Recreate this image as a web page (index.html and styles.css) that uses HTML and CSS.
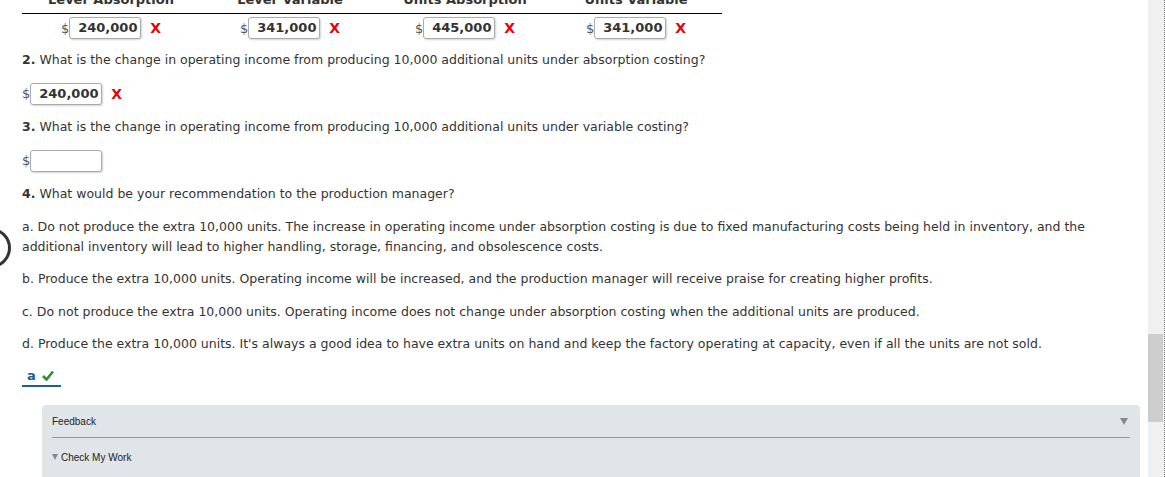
FILE: index.html
```html
<!DOCTYPE html>
<html>
<head>
<meta charset="utf-8">
<link rel="stylesheet" href="styles.css">
</head>
<body>
<div class="page">
  <div class="main">
    <div class="radio-edge"></div>
    <div class="content">
      <div class="grid">
        <div class="th">Lever Absorption</div>
        <div class="th">Lever Variable</div>
        <div class="th">Units Absorption</div>
        <div class="th">Units Variable</div>
        <div class="td"><span class="dollar">$</span><span class="field">240,000</span><span class="wrong">X</span></div>
        <div class="td"><span class="dollar">$</span><span class="field">341,000</span><span class="wrong">X</span></div>
        <div class="td"><span class="dollar">$</span><span class="field">445,000</span><span class="wrong">X</span></div>
        <div class="td"><span class="dollar">$</span><span class="field">341,000</span><span class="wrong">X</span></div>
      </div>
      <div class="stack">
        <p class="q"><b>2.</b> What is the change in operating income from producing 10,000 additional units under absorption costing?</p>
        <div class="answer"><span class="dollar">$</span><span class="field">240,000</span><span class="wrong">X</span></div>
        <p class="q"><b>3.</b> What is the change in operating income from producing 10,000 additional units under variable costing?</p>
        <div class="answer"><span class="dollar">$</span><span class="field empty"></span></div>
        <p class="q"><b>4.</b> What would be your recommendation to the production manager?</p>
        <p class="q">a. Do not produce the extra 10,000 units. The increase in operating income under absorption costing is due to fixed manufacturing costs being held in inventory, and the additional inventory will lead to higher handling, storage, financing, and obsolescence costs.</p>
        <p class="q">b. Produce the extra 10,000 units. Operating income will be increased, and the production manager will receive praise for creating higher profits.</p>
        <p class="q">c. Do not produce the extra 10,000 units. Operating income does not change under absorption costing when the additional units are produced.</p>
        <p class="q">d. Produce the extra 10,000 units. It's always a good idea to have extra units on hand and keep the factory operating at capacity, even if all the units are not sold.</p>
        <div class="choice"><span class="choice-letter">a</span><svg class="check" width="12" height="11" viewBox="0 0 12 11"><path d="M1 6 L4.5 9.5 L11 1.5" fill="none" stroke="#2f8f2f" stroke-width="2.6"/></svg></div>
      </div>
      <div class="panel">
        <div class="panel-head"><span>Feedback</span><span class="caret"></span></div>
        <div class="panel-body"><span class="caret small"></span>Check My Work</div>
      </div>
    </div>
  </div>
  <div class="scrollbar"><div class="thumb"></div></div>
</div>
</body>
</html>
```
FILE: styles.css
```css
html, body {
  margin: 0;
  padding: 0;
  background: #fff;
  overflow: hidden;
}
body {
  font-family: "DejaVu Sans", Verdana, sans-serif;
  font-size: 12.5px;
  color: #333;
}
.page {
  display: flex;
  width: 1165px;
  height: 477px;
  overflow: hidden;
}
.main {
  position: relative;
  flex: 1;
  overflow: hidden;
}
.radio-edge {
  position: absolute;
  left: -29px;
  top: 228px;
  width: 34px;
  height: 34px;
  border: 3px solid #333;
  border-radius: 50%;
}
.content {
  width: 1118px;
  padding-left: 22px;
}
.grid {
  display: grid;
  grid-template-columns: 178px 180px 170px 172px;
  margin-top: -9px;
}
.th {
  font-weight: bold;
  font-size: 13px;
  text-align: center;
  line-height: 18px;
  padding-bottom: 4px;
  border-bottom: 1px solid #000;
}
.td {
  display: flex;
  justify-content: center;
  align-items: center;
  padding-top: 3px;
  height: 22px;
}
.dollar {
  color: #555;
  font-size: 13px;
}
.field {
  display: inline-block;
  box-sizing: border-box;
  width: 72px;
  height: 22px;
  line-height: 20px;
  padding-left: 8px;
  border: 1px solid #aaa;
  border-radius: 3px;
  box-shadow: 1px 1px 2px rgba(0, 0, 0, 0.18);
  font-weight: bold;
  font-size: 13px;
  color: #333;
  background: #fff;
}
.wrong {
  margin-left: 9px;
  color: #e8000b;
  font-weight: bold;
  font-size: 14px;
}
.stack {
  display: flex;
  flex-direction: column;
  gap: 12.5px;
  margin-top: 11px;
}
.q {
  margin: 0;
  line-height: 20px;
}
.answer {
  display: flex;
  align-items: center;
  height: 22px;
}
.choice {
  display: flex;
  align-items: center;
  gap: 6px;
  width: 34px;
  height: 18px;
  padding-left: 5px;
  border-bottom: 2px solid #1a5e9a;
}
.choice-letter {
  color: #1a5e9a;
  font-weight: bold;
  font-size: 13px;
}
.check {
  display: block;
}
.panel {
  margin: 18px 0 0 20px;
  background: #dfe5e9;
  border-radius: 4px 4px 0 0;
  padding: 0 10px;
  height: 80px;
  font-family: "Liberation Sans", Arial, sans-serif;
  font-size: 10px;
  color: #222;
}
.panel-head {
  display: flex;
  justify-content: space-between;
  align-items: center;
  line-height: 12px;
  padding: 11px 2px 9px 0;
  border-bottom: 1px solid #999;
}
.caret {
  width: 0;
  height: 0;
  border-left: 4px solid transparent;
  border-right: 4px solid transparent;
  border-top: 7px solid #888;
}
.caret.small {
  display: inline-block;
  border-left-width: 3.5px;
  border-right-width: 3.5px;
  border-top-width: 6px;
  margin-right: 3px;
  vertical-align: 1px;
}
.panel-body {
  line-height: 12px;
  padding-top: 14px;
}
.scrollbar {
  width: 16px;
  height: 477px;
  background: #f0f0f0;
  border-right: 1px dotted #777;
  flex: none;
}
.thumb {
  margin-top: 334px;
  width: 15px;
  height: 88px;
  background: #cdcdcd;
}
```
